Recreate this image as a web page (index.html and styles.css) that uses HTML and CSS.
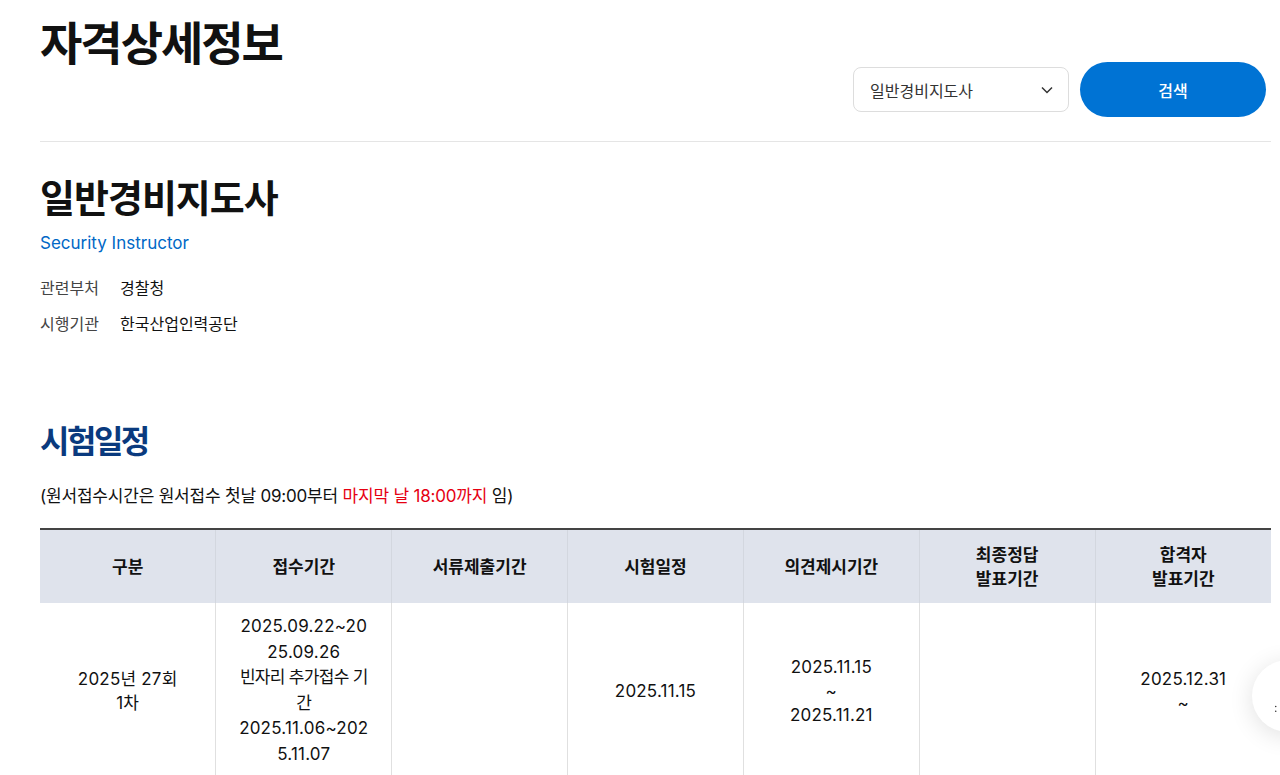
FILE: index.html
```html
<!DOCTYPE html>
<html lang="ko">
<head>
<meta charset="utf-8">
<title>자격상세정보</title>
<link rel="stylesheet" href="styles.css">
</head>
<body>
<div class="page">
  <header class="top">
    <h1 class="page-title">자격상세정보</h1>
    <div class="controls">
      <div class="select">
        <span>일반경비지도사</span>
        <svg class="chev" width="14" height="14" viewBox="0 0 14 14"><path d="M2 4.5 L7 9.5 L12 4.5" fill="none" stroke="#333" stroke-width="1.5"/></svg>
      </div>
      <button class="search">검색</button>
    </div>
  </header>

  <section class="qual">
    <h2 class="qual-name">일반경비지도사</h2>
    <p class="qual-en">Security Instructor</p>
    <dl class="info">
      <div class="info-row"><dt>관련부처</dt><dd>경찰청</dd></div>
      <div class="info-row"><dt>시행기관</dt><dd>한국산업인력공단</dd></div>
    </dl>
  </section>

  <section class="schedule">
    <h2 class="sec-title">시험일정</h2>
    <p class="note">(원서접수시간은 원서접수 첫날 09:00부터 <span class="red">마지막 날 18:00까지</span> 임)</p>
    <table class="tbl">
      <thead>
        <tr>
          <th>구분</th>
          <th>접수기간</th>
          <th>서류제출기간</th>
          <th>시험일정</th>
          <th>의견제시기간</th>
          <th>최종정답<br>발표기간</th>
          <th>합격자<br>발표기간</th>
        </tr>
      </thead>
      <tbody>
        <tr>
          <td>2025년 27회<br>1차</td>
          <td class="wrap">2025.09.22~2025.09.26<br><span class="ko">빈자리 추가접수 기간</span><br>2025.11.06~2025.11.07</td>
          <td></td>
          <td>2025.11.15</td>
          <td>2025.11.15<br>~<br>2025.11.21</td>
          <td></td>
          <td>2025.12.31<br>~</td>
        </tr>
      </tbody>
    </table>
  </section>
</div>
<div class="float-btn"><span>:</span></div>
</body>
</html>
```
FILE: styles.css
```css
* { box-sizing: border-box; }
body {
  margin: 0;
  font-family: Inter, "Noto Sans CJK KR", sans-serif;
  color: #111;
  background: #fff;
  overflow: hidden;
}
.page {
  padding: 0 9px 0 40px;
}
.top {
  display: flex;
  justify-content: space-between;
  align-items: flex-start;
  padding-bottom: 24px;
  border-bottom: 1px solid #e5e5e5;
}
.page-title {
  margin: 16px 0 0;
  font-size: 46px;
  line-height: 54px;
  font-weight: 700;
  letter-spacing: -2px;
  color: #111;
}
.controls {
  display: flex;
  align-items: center;
  gap: 11px;
  margin-top: 62px;
  margin-right: 5px;
}
.select {
  width: 216px;
  height: 45px;
  border: 1px solid #ddd;
  border-radius: 8px;
  display: flex;
  align-items: center;
  justify-content: space-between;
  padding: 0 14px 0 16px;
  font-size: 16px;
  color: #333;
}
.chev { display: block; }
.search {
  width: 186px;
  height: 55px;
  border: none;
  border-radius: 28px;
  background: #0073d4;
  color: #fff;
  font-family: inherit;
  font-size: 16px;
  font-weight: 500;
}
.qual { padding-top: 32px; }
.qual-name {
  margin: 0;
  font-size: 38px;
  line-height: 48px;
  font-weight: 700;
  letter-spacing: -1px;
}
.qual-en {
  margin: 9px 0 0;
  font-size: 17px;
  line-height: 24px;
  color: #0068c6;
}
.info { margin: 21px 0 0; }
.info-row {
  display: flex;
  font-size: 16px;
  line-height: 24px;
  margin-bottom: 12px;
}
.info-row dt { flex: 0 0 80px; color: #444; }
.info-row dd { margin: 0; color: #111; }
.schedule { padding-top: 74px; }
.sec-title {
  margin: 0;
  font-size: 32px;
  line-height: 40px;
  font-weight: 700;
  letter-spacing: -2.5px;
  color: #0a3a7e;
}
.note {
  margin: 22px 0 0;
  font-size: 17px;
  line-height: 24px;
  letter-spacing: -0.2px;
  color: #111;
}
.red { color: #e60012; }
.tbl {
  margin-top: 20px;
  width: 100%;
  border-collapse: collapse;
  table-layout: fixed;
  border-top: 2px solid #444;
}
.tbl th {
  height: 74px;
  background: #dfe3ec;
  font-size: 17px;
  line-height: 24px;
  font-weight: 700;
  border-left: 1px solid #d3d7df;
  padding: 0 10px;
}
.tbl td {
  padding: 11px 20px;
  text-align: center;
  font-size: 17px;
  line-height: 24px;
  letter-spacing: 0.2px;
  border-left: 1px solid #e0e0e0;
  vertical-align: middle;
}
.tbl th:first-child, .tbl td:first-child { border-left: none; }
.tbl td.wrap { word-break: break-all; line-height: 25.5px; }
.tbl .ko { letter-spacing: -0.7px; }
.float-btn {
  position: fixed;
  left: 1252px;
  top: 660px;
  width: 72px;
  height: 72px;
  border-radius: 50%;
  background: #fff;
  box-shadow: 0 4px 24px rgba(0,0,0,0.12);
  font-size: 12px;
  color: #333;
  padding: 40px 0 0 22px;
}
```
